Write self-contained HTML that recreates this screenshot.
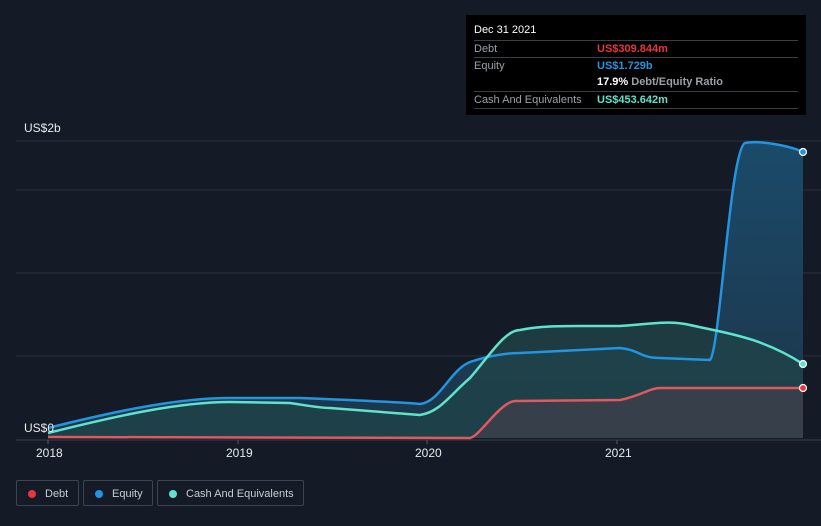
<!DOCTYPE html>
<html><head><style>
body{margin:0;background:#151b26;font-family:"Liberation Sans",sans-serif;}
.wrap{position:relative;width:821px;height:526px;overflow:hidden;background:#151b26}
.tip{position:absolute;left:466px;top:15px;width:340px;height:100px;background:#000;color:#fff;font-size:11px}
.row{position:absolute;left:8px;right:8px;border-top:1px solid #3a3f47;height:17px;line-height:17px}
.l{color:#9aa0a8;position:absolute;left:0}
.v{position:absolute;left:123px;font-weight:bold}
.leg{position:absolute;top:480px;height:26px;border:1px solid #3d4450;border-radius:2px;color:#c8ccd2;font-size:11px;line-height:26px;box-sizing:border-box;white-space:nowrap}
.dot{position:absolute;left:11px;top:9px;width:8px;height:8px;border-radius:50%}
.ax{position:absolute;color:#e8eaed;font-size:11px}
</style></head><body><div class="wrap">
<svg width="821" height="526" style="position:absolute;left:0;top:0">
<defs><linearGradient id="g" x1="0" y1="0" x2="0" y2="1"><stop offset="0" stop-color="#1b4a6a"/><stop offset="1" stop-color="#1c3548"/></linearGradient></defs>
<g stroke="#2a313c" stroke-width="1">
<line x1="16" y1="141" x2="821" y2="141"/><line x1="16" y1="190" x2="821" y2="190"/><line x1="16" y1="273" x2="821" y2="273"/><line x1="16" y1="356" x2="821" y2="356"/>
</g>
<line x1="16" y1="440" x2="821" y2="440" stroke="#3a414c"/>
<path d="M48,428 C120,410 180,398 230,398 L300,398 C350,400 400,402 420,404 C440,402 450,370 470,362 C490,355 510,353 520,353 L620,348 C640,350 640,358 660,358 L710,360 C720,350 730,150 745,143 C760,140 790,146 803,152 L803,438 L48,438Z" fill="url(#g)"/>
<path d="M48,433 C120,415 180,402 230,402 L290,403 C310,406 320,408 330,408 L420,415 C440,412 450,395 470,378 C490,355 505,330 520,330 C540,326 560,326 580,326 L620,326 C650,324 670,320 690,325 C720,332 760,336 803,364 L803,438 L48,438Z" fill="#1f4448" opacity="0.8"/>
<path d="M48,437 L470,438 C480,436 500,402 515,401 L620,400 C640,396 650,388 660,388 L803,388 L803,438 L48,438Z" fill="#3a3f4a" opacity="0.9"/>
<path d="M48,428 C120,410 180,398 230,398 L300,398 C350,400 400,402 420,404 C440,402 450,370 470,362 C490,355 510,353 520,353 L620,348 C640,350 640,358 660,358 L710,360 C720,350 730,150 745,143 C760,140 790,146 803,152" fill="none" stroke="#2394df" stroke-width="2.5"/>
<path d="M48,433 C120,415 180,402 230,402 L290,403 C310,406 320,408 330,408 L420,415 C440,412 450,395 470,378 C490,355 505,330 520,330 C540,326 560,326 580,326 L620,326 C650,324 670,320 690,325 C720,332 760,336 803,364" fill="none" stroke="#5fe3cd" stroke-width="2.5"/>
<path d="M48,437 L470,438 C480,436 500,402 515,401 L620,400 C640,396 650,388 660,388 L803,388" fill="none" stroke="#e0595e" stroke-width="2.5"/>
<circle cx="803" cy="152" r="3.5" fill="#2394df" stroke="#fff" stroke-width="1.2"/>
<circle cx="803" cy="364" r="3.5" fill="#5fe3cd" stroke="#fff" stroke-width="1.2"/>
<circle cx="803" cy="388" r="3.5" fill="#e8353f" stroke="#fff" stroke-width="1.2"/>
<g stroke="#555c66"><line x1="48" y1="440" x2="48" y2="444"/><line x1="238" y1="440" x2="238" y2="444"/><line x1="427" y1="440" x2="427" y2="444"/><line x1="617" y1="440" x2="617" y2="444"/></g>
</svg>
<div class="ax" style="left:24px;top:121px;font-size:12px">US$2b</div>
<div class="ax" style="left:24px;top:421px;font-size:12px">US$0</div>
<div class="ax" style="left:36px;top:446px;font-size:12px">2018</div>
<div class="ax" style="left:226px;top:446px;font-size:12px">2019</div>
<div class="ax" style="left:415px;top:446px;font-size:12px">2020</div>
<div class="ax" style="left:605px;top:446px;font-size:12px">2021</div>
<div class="tip">
<div style="position:absolute;left:8px;top:9px;font-size:11px">Dec 31 2021</div>
<div class="row" style="top:25px"><span class="l">Debt</span><span class="v" style="color:#e8353f">US$309.844m</span></div>
<div class="row" style="top:42px"><span class="l">Equity</span><span class="v" style="color:#2394df">US$1.729b</span></div>
<div class="row" style="top:59px;border-top:none"><span class="v" style="color:#fff">17.9% <span style="color:#9aa0a8">Debt/Equity Ratio</span></span></div>
<div class="row" style="top:76px"><span class="l">Cash And Equivalents</span><span class="v" style="color:#5fe3cd">US$453.642m</span></div>
<div class="row" style="top:93px;height:0"></div>
</div>
<div class="leg" style="left:16px;width:63px"><span class="dot" style="background:#e8353f"></span><span style="position:absolute;left:28px">Debt</span></div>
<div class="leg" style="left:83px;width:70px"><span class="dot" style="background:#2394df"></span><span style="position:absolute;left:28px">Equity</span></div>
<div class="leg" style="left:157px;width:147px"><span class="dot" style="background:#5fe3cd"></span><span style="position:absolute;left:28px">Cash And Equivalents</span></div>
</div></body></html>
